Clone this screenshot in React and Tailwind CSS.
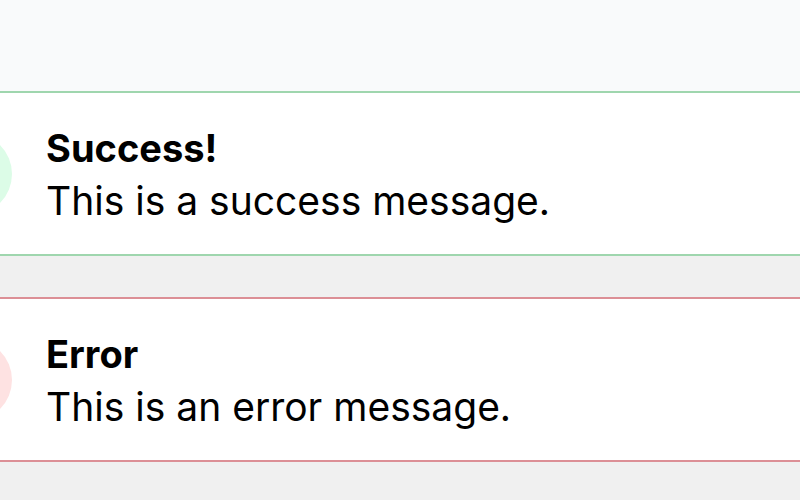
const alerts = [
  {
    title: 'Success!',
    message: 'This is a success message.',
    border: 'border-[#9fd6ae]',
    dot: 'bg-[#dcfce7]',
  },
  {
    title: 'Error',
    message: 'This is an error message.',
    border: 'border-[#dc8f96]',
    dot: 'bg-[#fee2e2]',
  },
];

function Alert({ title, message, border, dot }) {
  return (
    <div className={`flex h-[165px] items-center border-y-2 bg-white ${border}`}>
      <div className={`ml-[-70px] h-[82px] w-[82px] shrink-0 rounded-full ${dot}`} />
      <div className="ml-[34px] pt-[2px] text-black">
        <p className="text-[38px] leading-[52px] font-bold">{title}</p>
        <p className="text-[39px] leading-[54px]">{message}</p>
      </div>
    </div>
  );
}

export default function App() {
  return (
    <div className="min-h-screen overflow-hidden bg-[#f0f0f0] font-['Inter',sans-serif]">
      <div className="h-[91px] bg-[#f9fafb]" />
      <div className="flex flex-col gap-[41px]">
        {alerts.map((a) => (
          <Alert key={a.title} {...a} />
        ))}
      </div>
    </div>
  );
}
